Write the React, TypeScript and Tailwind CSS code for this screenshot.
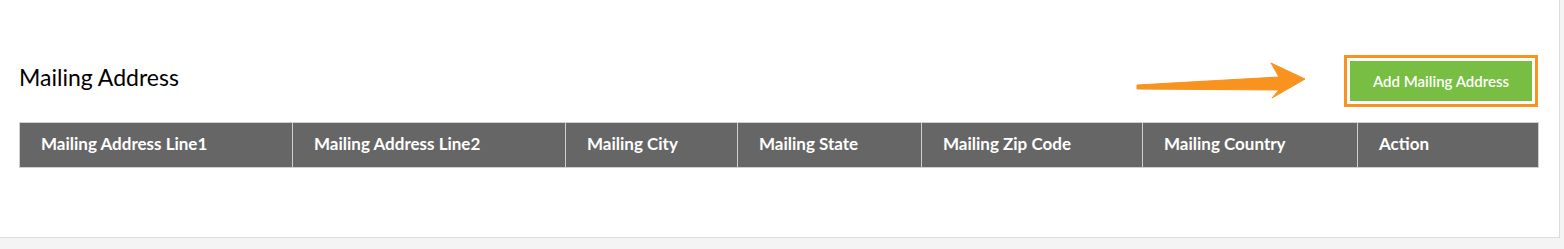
const columns = [
  { label: 'Mailing Address Line1', width: 'w-[273px]' },
  { label: 'Mailing Address Line2', width: 'w-[273px]' },
  { label: 'Mailing City', width: 'w-[172px]' },
  { label: 'Mailing State', width: 'w-[184px]' },
  { label: 'Mailing Zip Code', width: 'w-[221px]' },
  { label: 'Mailing Country', width: 'w-[215px]' },
  { label: 'Action', width: 'w-[181px]' },
];

function Arrow() {
  return (
    <svg
      className="absolute left-[1130px] top-[58px] pointer-events-none"
      width="180"
      height="45"
      viewBox="1130 58 180 45"
    >
      <polygon
        points="1137,85 1279,77 1271,63 1305,79 1272,98 1279,90 1137,89"
        fill="#f7931e"
        stroke="#f7931e"
        strokeWidth="1"
        strokeLinejoin="round"
      />
    </svg>
  );
}

export default function App() {
  return (
    <div className="w-[1564px] h-[249px] bg-[#f4f4f4] font-['Lato',sans-serif]">
      <div className="relative w-[1560px] h-[238px] bg-white border-r border-b border-[#dcdcdc]">
        <div className="flex items-start justify-between pl-[19px] pr-[21px] pt-[55px]">
          <h2 className="mt-[11px] text-[23px] leading-none text-black">Mailing Address</h2>
          <div className="border-[3px] border-[#f7931e] p-[3px] mb-[15px]">
            <button className="w-[182px] h-[40px] bg-[#77be43] text-white text-[15px] font-semibold">
              Add Mailing Address
            </button>
          </div>
        </div>
        <Arrow />
        <div className="pl-[19px]">
          <table className="table-fixed border-collapse border border-[#cfcfcf]">
            <thead>
              <tr className="bg-[#666666] h-[45px]">
                {columns.map((c) => (
                  <th
                    key={c.label}
                    className={`${c.width} border-l border-[#cfcfcf] text-left pl-[21px] pb-[3px] text-white text-[17px] font-bold`}
                  >
                    {c.label}
                  </th>
                ))}
              </tr>
            </thead>
          </table>
        </div>
      </div>
    </div>
  );
}
